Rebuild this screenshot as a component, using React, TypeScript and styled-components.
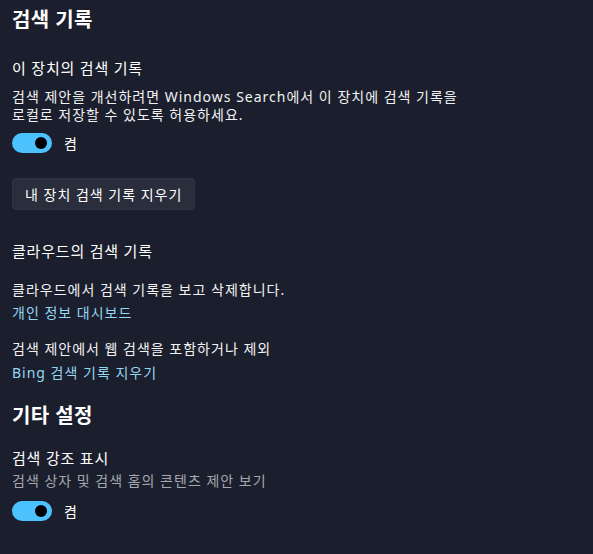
import React, { useState } from 'react';
import styled, { createGlobalStyle } from 'styled-components';

const GlobalStyle = createGlobalStyle`
  html, body {
    margin: 0;
    padding: 0;
    background: #1b1f2d;
  }
  body {
    font-family: "Segoe UI", "Noto Sans", "Noto Sans CJK KR", sans-serif;
    color: #ffffff;
  }
`;

const Page = styled.div`
  width: 593px;
  height: 554px;
  box-sizing: border-box;
  padding: 4px 12px 0;
  background: #1b1f2d;
  overflow: hidden;
`;

const SectionTitle = styled.h2<{ $top?: number }>`
  margin: ${(p) => p.$top ?? 0}px 0 0;
  font-size: 20px;
  font-weight: 600;
  line-height: 32px;
  letter-spacing: 0.4px;
  color: #ffffff;
`;

const GroupTitle = styled.div<{ $top: number }>`
  margin-top: ${(p) => p.$top}px;
  font-size: 15px;
  line-height: 22px;
  letter-spacing: 0.8px;
  color: #ffffff;
`;

const Text = styled.div<{ $top: number; $muted?: boolean }>`
  margin-top: ${(p) => p.$top}px;
  font-size: 14px;
  line-height: 18px;
  letter-spacing: 1px;
  word-break: keep-all;
  color: ${(p) => (p.$muted ? '#a4a7b0' : '#f2f2f2')};
  max-width: 462px;
`;

const Link = styled.a<{ $top: number }>`
  display: block;
  margin-top: ${(p) => p.$top}px;
  font-size: 14px;
  line-height: 19px;
  letter-spacing: 1px;
  color: #95d6f2;
  text-decoration: none;
  cursor: pointer;
`;

const ToggleRow = styled.label<{ $top: number }>`
  display: flex;
  align-items: center;
  gap: 12px;
  margin-top: ${(p) => p.$top}px;
  font-size: 14px;
  cursor: pointer;
`;

const Track = styled.span<{ $on: boolean }>`
  position: relative;
  width: 40px;
  height: 20px;
  border-radius: 10px;
  box-sizing: border-box;
  background: ${(p) => (p.$on ? '#4cc2ff' : 'transparent')};
  border: ${(p) => (p.$on ? 'none' : '1px solid #c5c5c5')};
`;

const Knob = styled.span<{ $on: boolean }>`
  position: absolute;
  top: 4px;
  left: ${(p) => (p.$on ? 23 : 4)}px;
  width: 12px;
  height: 12px;
  border-radius: 50%;
  background: ${(p) => (p.$on ? '#000000' : '#c5c5c5')};
`;

const Button = styled.button`
  margin-top: 25px;
  height: 32px;
  padding: 0 12px;
  border: 1px solid #2f3443;
  border-radius: 4px;
  background: #2a2e3c;
  color: #ffffff;
  font-family: inherit;
  font-size: 14px;
  letter-spacing: 1px;
  cursor: pointer;
`;

const Toggle: React.FC<{ top: number }> = ({ top }) => {
  const [on, setOn] = useState(true);
  return (
    <ToggleRow $top={top} onClick={() => setOn(!on)}>
      <Track $on={on}>
        <Knob $on={on} />
      </Track>
      {on ? '켬' : '끔'}
    </ToggleRow>
  );
};

export default function App() {
  return (
    <Page>
      <GlobalStyle />
      <SectionTitle>검색 기록</SectionTitle>
      <GroupTitle $top={21}>이 장치의 검색 기록</GroupTitle>
      <Text $top={9}>
        검색 제안을 개선하려면 Windows Search에서 이 장치에 검색 기록을 로컬로 저장할 수 있도록 허용하세요.
      </Text>
      <Toggle top={9} />
      <Button>내 장치 검색 기록 지우기</Button>
      <GroupTitle $top={30}>클라우드의 검색 기록</GroupTitle>
      <Text $top={19}>클라우드에서 검색 기록을 보고 삭제합니다.</Text>
      <Link $top={4}>개인 정보 대시보드</Link>
      <Text $top={18}>검색 제안에서 웹 검색을 포함하거나 제외</Text>
      <Link $top={5}>Bing 검색 기록 지우기</Link>
      <SectionTitle $top={18}>기타 설정</SectionTitle>
      <GroupTitle $top={15}>검색 강조 표시</GroupTitle>
      <Text $top={3} $muted>
        검색 상자 및 검색 홈의 콘텐츠 제안 보기
      </Text>
      <Toggle top={11} />
    </Page>
  );
}
